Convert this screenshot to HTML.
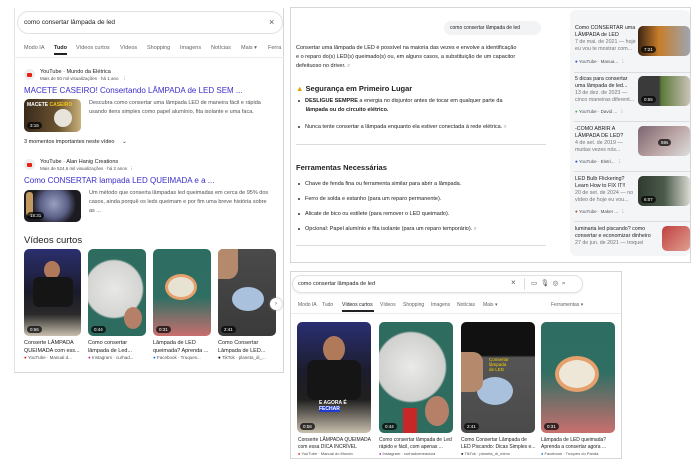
<!DOCTYPE html>
<html><head><meta charset="utf-8">
<style>
*{margin:0;padding:0;box-sizing:border-box}
body{width:700px;height:467px;background:#fff;position:relative;overflow:hidden;font-family:"Liberation Sans",Arial,sans-serif;color:#202124}
.a{position:absolute;white-space:nowrap}
.panel{position:absolute;border:1px solid #d6d6d6;background:#fff}
.s{font-size:5.5px;color:#4d5156}
.t{font-size:5.5px;color:#202124}
.link{color:#3b2fc9;font-size:8px}
.th{position:absolute;border-radius:5px;overflow:hidden}
.yt{position:absolute;width:11px;height:11px;border-radius:50%;background:#eee}
.yt:after{content:"";position:absolute;left:3px;top:3.5px;width:5px;height:4px;background:#e62117;border-radius:1px}
.dur{position:absolute;left:3px;bottom:3px;background:rgba(0,0,0,.7);color:#fff;font-size:4.5px;padding:1px 3px;border-radius:4px}
.tab{font-size:5.5px;color:#5f6368}
.hr{position:absolute;height:1px;background:#dadce0}
.dot{display:inline-block;width:2px;height:2px;background:#333;border-radius:50%;margin-right:5px;vertical-align:middle}
</style></head><body>

<!-- LEFT PANEL -->
<div class="panel" style="left:14px;top:8px;width:270px;height:365px;border-top:none;border-left-color:#e4e4e4"></div>
<div class="a" style="left:17px;top:11px;width:266px;height:23px;border:1px solid #dfe1e5;border-radius:12px;background:#fff"></div>
<div class="a" style="left:24px;top:19px;font-size:6.5px;color:#202124">como consertar lâmpada de led</div>
<div class="a" style="left:269px;top:17px;font-size:9px;color:#555">×</div>
<div class="a tab" style="left:24px;top:45px">Modo IA</div>
<div class="a" style="left:54px;top:45px;font-size:5.5px;font-weight:bold">Tudo</div>
<div class="a" style="left:54px;top:53px;width:13px;height:2px;background:#202124"></div>
<div class="a tab" style="left:76px;top:45px">Vídeos curtos</div>
<div class="a tab" style="left:120px;top:45px">Vídeos</div>
<div class="a tab" style="left:147px;top:45px">Shopping</div>
<div class="a tab" style="left:180px;top:45px">Imagens</div>
<div class="a tab" style="left:211px;top:45px">Notícias</div>
<div class="a tab" style="left:241px;top:45px">Mais ▾</div>
<div class="a tab" style="left:268px;top:45px">Ferra</div>
<div class="hr" style="left:14px;top:57px;width:270px;background:#ececec"></div>

<div class="yt" style="left:24px;top:69px"></div>
<div class="a t" style="left:40px;top:69px">YouTube · Mundo da Elétrica</div>
<div class="a s" style="left:40px;top:76px;font-size:4.5px">Mais de 50 mil visualizações · há 1 ano &nbsp;&nbsp;⋮</div>
<div class="a link" style="left:24px;top:86px">MACETE CASEIRO! Consertando LÂMPADA de LED SEM ...</div>
<div class="th" style="left:24px;top:99px;width:57px;height:33px;background:linear-gradient(90deg,#3a2a1c,#6b5430 60%,#c9b07a)">
 <div class="a" style="left:3px;top:3px;font-size:5px;font-weight:bold;color:#fff">MACETE <span style="color:#f5c518">CASEIRO</span></div>
 <div class="a" style="left:30px;top:10px;width:18px;height:18px;border-radius:50%;background:#e8e4dc"></div>
 <div class="dur">3:16</div></div>
<div class="a s" style="left:89px;top:99px;line-height:9px">Descubra como consertar uma lâmpada LED de maneira fácil e rápida<br>usando itens simples como papel alumínio, fita isolante e uma faca.</div>
<div class="a t" style="left:24px;top:139px">3 momentos importantes neste vídeo &nbsp;&nbsp;&nbsp;&nbsp;⌄</div>

<div class="yt" style="left:24px;top:159px"></div>
<div class="a t" style="left:40px;top:159px">YouTube · Alan Hanig Creations</div>
<div class="a s" style="left:40px;top:166px;font-size:4.5px">Mais de 524,6 mil visualizações · há 2 anos &nbsp;⋮</div>
<div class="a link" style="left:24px;top:176px">Como CONSERTAR lampada LED QUEIMADA e a ...</div>
<div class="th" style="left:24px;top:190px;width:57px;height:32px;background:radial-gradient(circle at 30px 14px,#9aa0c0 0,#5a5f86 14px,#1d1b22 22px)">
 <div class="a" style="left:2px;top:2px;width:7px;height:24px;background:#c09a60;border-radius:3px"></div>
 <div class="dur">18:31</div></div>
<div class="a s" style="left:89px;top:189px;line-height:9px">Um método que conserta lâmpadas led queimadas em cerca de 95% dos<br>casos, ainda porquê os leds queimam e por fim uma breve história sobre<br>as ...</div>

<div class="a" style="left:24px;top:235px;font-size:9.5px;color:#202124">Vídeos curtos</div>
<div class="th" style="left:24px;top:249px;width:57px;height:87px;background:linear-gradient(180deg,#2b2f6e,#1a1b2a 50%,#2a2a2a 75%,#c9bfae)"><div class="a" style="left:20px;top:12px;width:16px;height:18px;border-radius:50%;background:#b07a5a"></div><div class="a" style="left:9px;top:28px;width:40px;height:30px;background:#151515;border-radius:6px"></div><div class="dur">0:56</div></div>
<div class="th" style="left:88px;top:249px;width:58px;height:87px;background:radial-gradient(circle at 26px 40px,#e8e8e6 0,#d4d4d2 28px,#2f6c60 30px)"><div class="a" style="left:36px;top:58px;width:18px;height:22px;border-radius:50%;background:#b58067"></div><div class="dur">0:44</div></div>
<div class="th" style="left:153px;top:249px;width:58px;height:87px;background:linear-gradient(180deg,#2e6e62,#2f6f63 55%,#c86f6e)"><div class="a" style="left:12px;top:25px;width:32px;height:26px;border-radius:50%;background:#e8e2d2;border:3px solid #e6a06b"></div><div class="dur">0:31</div></div>
<div class="th" style="left:218px;top:249px;width:58px;height:87px;background:linear-gradient(180deg,#4a4a4a,#3a3a3a)"><div class="a" style="left:14px;top:38px;width:32px;height:24px;border-radius:50%;background:#a9c1dc"></div><div class="a" style="left:0;top:0;width:20px;height:30px;background:#b58a6c;border-radius:0 0 10px 0"></div><div class="dur">2:41</div></div>
<div class="a" style="left:270px;top:298px;width:12px;height:12px;border-radius:50%;background:#fff;box-shadow:0 0 2px #999;font-size:6px;text-align:center;line-height:12px;color:#555">›</div>
<div class="a t" style="left:24px;top:340px;line-height:7.5px">Conserte LÂMPADA<br>QUEIMADA com ess...</div>
<div class="a t" style="left:88px;top:340px;line-height:7.5px">Como consertar<br>lâmpada de Led...</div>
<div class="a t" style="left:153px;top:340px;line-height:7.5px">Lâmpada de LED<br>queimada? Aprenda ...</div>
<div class="a t" style="left:218px;top:340px;line-height:7.5px">Como Consertar<br>Lâmpada de LED...</div>
<div class="a s" style="left:24px;top:355px;font-size:4.5px"><span style="color:#e62117">●</span> YouTube · Manual d...</div>
<div class="a s" style="left:88px;top:355px;font-size:4.5px"><span style="color:#d6249f">●</span> Instagram · curhad...</div>
<div class="a s" style="left:153px;top:355px;font-size:4.5px"><span style="color:#1877f2">●</span> Facebook · Truques...</div>
<div class="a s" style="left:218px;top:355px;font-size:4.5px"><span style="color:#000">●</span> TikTok · planeta_di_...</div>

<!-- TOP RIGHT PANEL -->
<div class="panel" style="left:290px;top:7px;width:401px;height:256px"></div>
<div class="a" style="left:444px;top:21px;width:97px;height:14px;border-radius:8px;background:#f1f3f4"></div>
<div class="a t" style="left:450px;top:25px;font-size:5px">como consertar lâmpada de led</div>
<div class="a t" style="left:296px;top:44px;line-height:9px;font-size:5.5px">Consertar uma lâmpada de LED é possível na maioria das vezes e envolve a identificação<br>e o reparo do(s) LED(s) queimado(s) ou, em alguns casos, a substituição de um capacitor<br>defeituoso no driver. <span style="color:#999">⌕</span></div>
<div class="a" style="left:296px;top:84px;font-size:7.5px;font-weight:bold"><span style="color:#e3a008">▲</span> Segurança em Primeiro Lugar</div>
<div class="a t" style="left:298px;top:97px;line-height:9px"><span class="dot"></span><b>DESLIGUE SEMPRE</b> a energia no disjuntor antes de tocar em qualquer parte da<br>&nbsp;&nbsp;&nbsp;&nbsp;&nbsp;<b>lâmpada ou do circuito elétrico.</b></div>
<div class="a t" style="left:298px;top:124px"><span class="dot"></span>Nunca tente consertar a lâmpada enquanto ela estiver conectada à rede elétrica. <span style="color:#999">⌕</span></div>
<div class="hr" style="left:296px;top:144px;width:250px"></div>
<div class="a" style="left:296px;top:163px;font-size:7.5px;font-weight:bold">Ferramentas Necessárias</div>
<div class="a t" style="left:298px;top:181px"><span class="dot"></span>Chave de fenda fina ou ferramenta similar para abrir a lâmpada.</div>
<div class="a t" style="left:298px;top:196px"><span class="dot"></span>Ferro de solda e estanho (para um reparo permanente).</div>
<div class="a t" style="left:298px;top:211px"><span class="dot"></span>Alicate de bico ou estilete (para remover o LED queimado).</div>
<div class="a t" style="left:298px;top:226px"><span class="dot"></span>Opcional: Papel alumínio e fita isolante (para um reparo temporário). <span style="color:#999">⌕</span></div>
<div class="hr" style="left:296px;top:245px;width:250px"></div>

<div class="a" style="left:570px;top:10px;width:120px;height:246px;background:#f4f5f7;border-radius:6px"></div>
<div class="a t" style="left:575px;top:25px;line-height:7px;font-size:5.3px">Como CONSERTAR uma<br>LÂMPADA de LED<br><span style="color:#70757a">7 de mai. de 2021 — hoje<br>eu vou te mostrar com...</span></div>
<div class="a s" style="left:575px;top:59px;font-size:4.5px"><span style="color:#2a4ad8">●</span> YouTube · Manua... &nbsp;⋮</div>
<div class="th" style="left:638px;top:26px;width:52px;height:30px;background:linear-gradient(90deg,#3b2514,#c87d2a 40%,#9ea5b0)"><div class="dur">7:21</div></div>
<div class="hr" style="left:574px;top:72px;width:116px"></div>
<div class="a t" style="left:575px;top:76px;line-height:7px;font-size:5.3px">5 dicas para consertar<br>uma lâmpada de led...<br><span style="color:#70757a">13 de dez. de 2023 —<br>cinco maneiras diferent...</span></div>
<div class="a s" style="left:575px;top:109px;font-size:4.5px"><span style="color:#4caf50">●</span> YouTube · David ... &nbsp;⋮</div>
<div class="th" style="left:638px;top:76px;width:52px;height:30px;background:linear-gradient(90deg,#3a3a3a 40%,#5c7a3a 45%,#c9c2b5)"><div class="dur">0:55</div></div>
<div class="hr" style="left:574px;top:121px;width:116px"></div>
<div class="a t" style="left:575px;top:126px;line-height:7px;font-size:5.3px">-COMO ABRIR A<br>LÂMPADA DE LED?<br><span style="color:#70757a">4 de set. de 2019 —<br>muitas vezes nós...</span></div>
<div class="a s" style="left:575px;top:159px;font-size:4.5px"><span style="color:#2a4ad8">●</span> YouTube · Eletri... &nbsp;⋮</div>
<div class="th" style="left:638px;top:126px;width:52px;height:30px;background:linear-gradient(135deg,#7a6570,#b8a0a0 50%,#ddd)"><div class="dur" style="left:20px;bottom:10px">59s</div></div>
<div class="hr" style="left:574px;top:171px;width:116px"></div>
<div class="a t" style="left:575px;top:176px;line-height:7px;font-size:5.3px">LED Bulb Flickering?<br>Learn How to FIX IT!!<br><span style="color:#70757a">20 de set. de 2024 — no<br>vídeo de hoje eu vou...</span></div>
<div class="a s" style="left:575px;top:209px;font-size:4.5px"><span style="color:#a0522d">●</span> YouTube · Maker ... &nbsp;⋮</div>
<div class="th" style="left:638px;top:176px;width:52px;height:30px;background:linear-gradient(90deg,#2f3a2f,#4a5a4a 50%,#d8d8d0)"><div class="dur">6:07</div></div>
<div class="hr" style="left:574px;top:221px;width:116px"></div>
<div class="a t" style="left:575px;top:226px;line-height:7px;font-size:5.3px">luminaria led piscando? como<br>consertar e economizar dinheiro<br><span style="color:#70757a">27 de jun. de 2021 — troquei</span></div>
<div class="th" style="left:662px;top:226px;width:28px;height:25px;background:linear-gradient(135deg,#c04040,#e0a090)"></div>

<!-- BOTTOM RIGHT PANEL -->
<div class="panel" style="left:290px;top:271px;width:332px;height:188px"></div>
<div class="a" style="left:292px;top:275px;width:291px;height:18px;border:1px solid #dfe1e5;border-radius:9px;background:#fff;box-shadow:0 1px 2px #eee"></div>
<div class="a" style="left:298px;top:281px;font-size:5.5px">como consertar lâmpada de led</div>
<div class="a" style="left:511px;top:278px;font-size:8px;color:#555">×</div>
<div class="a" style="left:524px;top:278px;width:1px;height:12px;background:#ddd"></div>
<div class="a" style="left:531px;top:279px;font-size:6.5px;color:#555">▭ &nbsp;🎙&#xFE0E; &nbsp;◎ &nbsp;⌕</div>
<div class="a tab" style="left:298px;top:302px;font-size:5px">Modo IA</div>
<div class="a tab" style="left:322px;top:302px;font-size:5px">Tudo</div>
<div class="a" style="left:342px;top:302px;font-size:5px;color:#202124">Vídeos curtos</div>
<div class="a" style="left:342px;top:310px;width:32px;height:2px;background:#202124"></div>
<div class="a tab" style="left:380px;top:302px;font-size:5px">Vídeos</div>
<div class="a tab" style="left:403px;top:302px;font-size:5px">Shopping</div>
<div class="a tab" style="left:431px;top:302px;font-size:5px">Imagens</div>
<div class="a tab" style="left:457px;top:302px;font-size:5px">Notícias</div>
<div class="a tab" style="left:483px;top:302px;font-size:5px">Mais ▾</div>
<div class="a tab" style="left:551px;top:302px;font-size:5px">Ferramentas ▾</div>
<div class="hr" style="left:291px;top:313px;width:330px;background:#ececec"></div>

<div class="th" style="left:297px;top:322px;width:74px;height:111px;background:linear-gradient(180deg,#2a2f72,#1c1c2c 45%,#202020 70%,#c9bfae)"><div class="a" style="left:26px;top:14px;width:22px;height:26px;border-radius:50%;background:#b07a5a"></div><div class="a" style="left:10px;top:38px;width:54px;height:40px;background:#151515;border-radius:8px"></div><div class="a" style="left:22px;top:78px;font-size:5px;color:#fff;font-weight:bold">E AGORA É<br><span style="background:#1f3bd0">FECHAR</span></div><div class="dur">0:58</div></div>
<div class="th" style="left:379px;top:322px;width:74px;height:111px;background:radial-gradient(circle at 32px 45px,#eaeae8 0,#d0d0ce 34px,#2f6c60 36px)"><div class="a" style="left:46px;top:74px;width:24px;height:30px;border-radius:50%;background:#b58067"></div><div class="a" style="left:24px;top:86px;width:14px;height:25px;background:#c62828"></div><div class="dur">0:44</div></div>
<div class="th" style="left:461px;top:322px;width:74px;height:111px;background:linear-gradient(180deg,#111 30%,#555 32%,#4a4a4a)"><div class="a" style="left:16px;top:55px;width:36px;height:28px;border-radius:50%;background:#a9c1dc"></div><div class="a" style="left:0;top:30px;width:22px;height:40px;background:#b58a6c;border-radius:0 10px 10px 0"></div><div class="a" style="left:28px;top:35px;font-size:4.5px;color:#f5d000">Consertar<br>lâmpada<br>de LED</div><div class="dur">2:41</div></div>
<div class="th" style="left:541px;top:322px;width:74px;height:111px;background:linear-gradient(180deg,#2e6e62,#2f6f63 45%,#c86f6e)"><div class="a" style="left:14px;top:34px;width:44px;height:36px;border-radius:50%;background:#eee6d6;border:4px solid #e6a06b"></div><div class="dur">0:31</div></div>

<div class="a t" style="left:298px;top:437px;line-height:6.5px;font-size:5px">Conserte LÂMPADA QUEIMADA<br>com essa DICA INCRÍVEL</div>
<div class="a t" style="left:379px;top:437px;line-height:6.5px;font-size:5px">Como consertar lâmpada de Led<br>rápido e fácil, com apenas ...</div>
<div class="a t" style="left:461px;top:437px;line-height:6.5px;font-size:5px">Como Consertar Lâmpada de<br>LED Piscando: Dicas Simples e...</div>
<div class="a t" style="left:541px;top:437px;line-height:6.5px;font-size:5px">Lâmpada de LED queimada?<br>Aprenda a consertar agora ...</div>
<div class="a s" style="left:298px;top:451px;font-size:4px"><span style="color:#e62117">●</span> YouTube · Manual do Mundo</div>
<div class="a s" style="left:379px;top:451px;font-size:4px"><span style="color:#d6249f">●</span> Instagram · curhadoeneadora</div>
<div class="a s" style="left:461px;top:451px;font-size:4px"><span style="color:#000">●</span> TikTok · planeta_di_mimo</div>
<div class="a s" style="left:541px;top:451px;font-size:4px"><span style="color:#1877f2">●</span> Facebook · Truques do Panda</div>
</body></html>
